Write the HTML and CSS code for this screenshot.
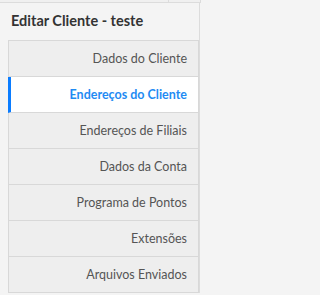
FILE: index.html
```html
<!DOCTYPE html>
<html lang="pt">
<head>
<meta charset="utf-8">
<link rel="stylesheet" href="styles.css">
</head>
<body>
<div class="topbar"><div class="topcell"></div></div>
<div class="panel">
  <h1 class="title">Editar Cliente - teste</h1>
  <ul class="tabs">
    <li class="tab">Dados do Cliente</li>
    <li class="tab active">Endereços do Cliente</li>
    <li class="tab">Endereços de Filiais</li>
    <li class="tab">Dados da Conta</li>
    <li class="tab">Programa de Pontos</li>
    <li class="tab">Extensões</li>
    <li class="tab">Arquivos Enviados</li>
  </ul>
</div>
</body>
</html>
```
FILE: styles.css
```css
html, body {
  margin: 0;
  padding: 0;
  background: #f4f4f4;
}
body {
  width: 201px;
  height: 295px;
  overflow: hidden;
  font-family: "Lato", "Open Sans", sans-serif;
}
.topbar {
  height: 2px;
  border-bottom: 1px solid #dcdcdc;
  background: #f0f0f0;
  width: 200px;
  border-right: 1px solid #dcdcdc;
}
.topcell {
  width: 168px;
  height: 2px;
  border-right: 1px solid #dcdcdc;
}
.panel {
  width: 199px;
  border-right: 1px solid #dcdcdc;
  padding-top: 1px;
}
.title {
  margin: 0;
  padding: 8px 0 0 11px;
  height: 28px;
  box-sizing: border-box;
  font-size: 14.5px;
  font-weight: 700;
  color: #333;
  line-height: 18px;
}
.tabs {
  list-style: none;
  margin: 8px 0 0 8px;
  padding: 0;
  width: 191px;
  box-sizing: border-box;
  border: 1px solid #d8d8d8;
  border-bottom: none;
  background: #f4f4f4;
}
.tab {
  height: 36px;
  box-sizing: border-box;
  border-bottom: 1px solid #d8d8d8;
  background: #eeeeee;
  color: #555;
  font-size: 12.5px;
  display: flex;
  align-items: center;
  justify-content: flex-end;
  padding-right: 11px;
}
.tab.active {
  background: #fff;
  color: #1f8bf3;
  font-weight: 700;
  border-left: 3px solid #0a7cff;
  margin-left: -1px;
}
```
